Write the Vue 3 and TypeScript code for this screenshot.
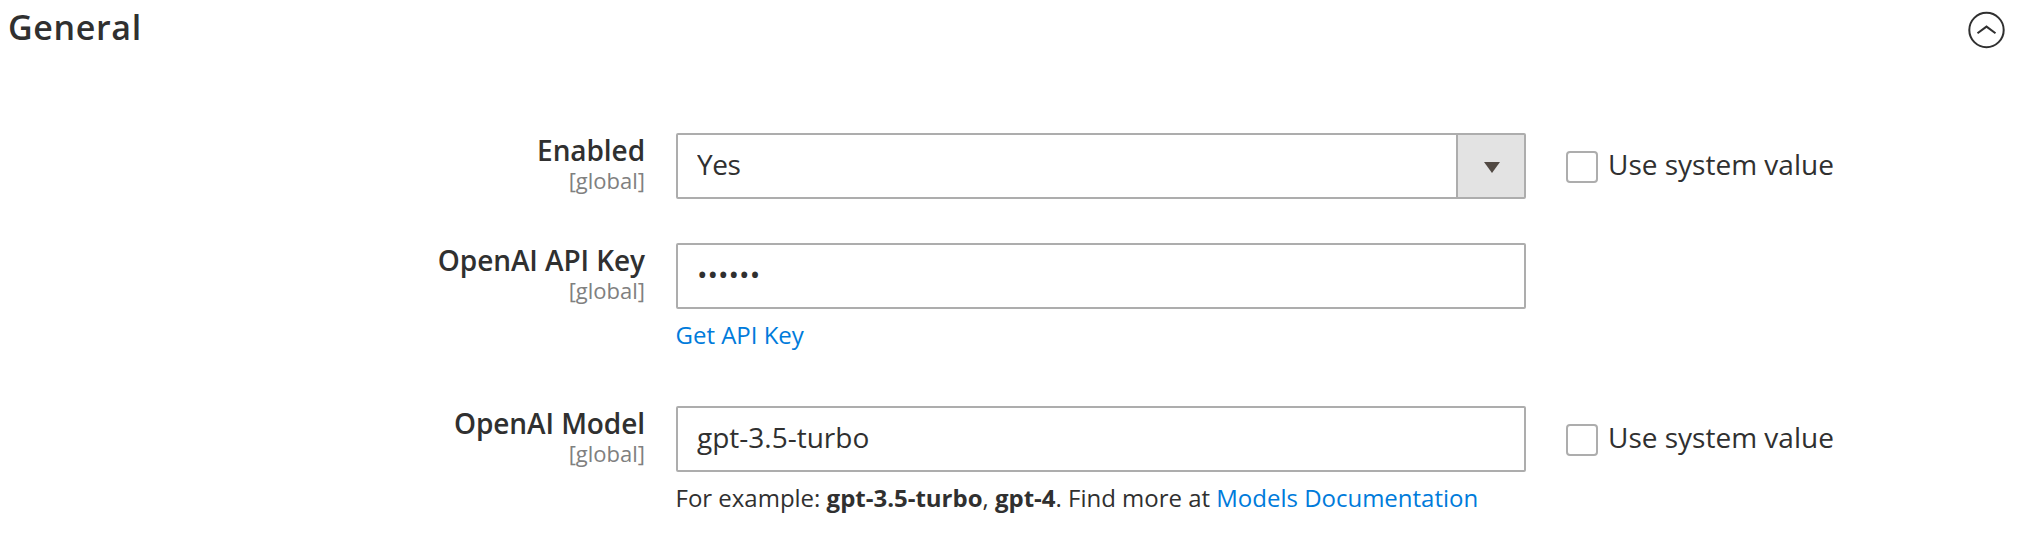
<script setup lang="ts">
import { ref } from 'vue'

interface Field {
  id: string
  label: string
  type: 'select' | 'password' | 'text'
  value: string
  inherit: boolean
}

const fields = ref<Field[]>([
  { id: 'enabled', label: 'Enabled', type: 'select', value: 'Yes', inherit: true },
  { id: 'api-key', label: 'OpenAI API Key', type: 'password', value: '******', inherit: false },
  { id: 'model', label: 'OpenAI Model', type: 'text', value: 'gpt-3.5-turbo', inherit: true },
])
</script>

<template>
  <section class="config">
    <header class="head">
      <h2 class="title">General</h2>
      <svg class="toggle" viewBox="0 0 38 38" aria-hidden="true">
        <circle cx="18.5" cy="19" r="17.2" />
        <path d="M9.5 22.3 18.5 15.6 27.5 22.3" />
      </svg>
    </header>
    <div v-for="f in fields" :key="f.id" class="row" :class="f.id">
      <label class="label" :for="f.id">
        <span class="name">{{ f.label }}</span>
        <span class="scope">[global]</span>
      </label>
      <div class="value">
        <div v-if="f.type === 'select'" class="select">
          <select :id="f.id" v-model="f.value" class="control">
            <option>Yes</option>
            <option>No</option>
          </select>
          <span class="arrow"><svg viewBox="0 0 16 11"><path d="M0 0H16L8 11Z" /></svg></span>
        </div>
        <input v-else :id="f.id" v-model="f.value" class="control" :type="f.type" />
        <p v-if="f.id === 'api-key'" class="note"><a>Get API Key</a></p>
        <p v-if="f.id === 'model'" class="note">
          For example: <b>gpt-3.5-turbo</b>, <b>gpt-4</b>. Find more at <a>Models Documentation</a>
        </p>
      </div>
      <label v-if="f.inherit" class="inherit">
        <input class="box" type="checkbox" />
        <span class="inherit-text">Use system value</span>
      </label>
    </div>
  </section>
</template>

<style>
body {
  margin: 0;
  background: #fff;
}
</style>

<style scoped>
.config {
  box-sizing: border-box;
  height: 536px;
  overflow: hidden;
  color: #303030;
  font-family: "Open Sans", "Noto Sans", sans-serif;
  font-size: 28px;
}
.head {
  display: flex;
  justify-content: space-between;
  box-sizing: border-box;
  height: 133px;
  padding: 7px 12px 0 8px;
}
.title {
  margin: 0;
  font-size: 34px;
  font-weight: 600;
  line-height: 40px;
  letter-spacing: 0.65px;
}
.toggle {
  width: 38px;
  height: 38px;
  margin-top: 4px;
  fill: none;
  stroke: #303030;
  stroke-width: 2;
}
.row {
  display: grid;
  grid-template-columns: 645px 850px auto;
  column-gap: 31px;
  align-items: start;
  justify-content: start;
}
.row.enabled {
  margin-bottom: 44px;
}
.row.api-key {
  margin-bottom: 55px;
}
.label {
  display: flex;
  flex-direction: column;
  align-items: flex-end;
  padding-top: 1px;
}
.name {
  font-weight: 600;
  line-height: 32px;
  letter-spacing: -0.08px;
}
.scope {
  color: #808080;
  font-size: 22px;
  line-height: 28px;
}
.select {
  display: grid;
}
.select > * {
  grid-area: 1 / 1;
}
.control {
  display: block;
  box-sizing: border-box;
  width: 100%;
  height: 66px;
  margin: 0;
  padding: 0 19px 4px;
  border: 2px solid #adadad;
  border-radius: 2px;
  outline: 0;
  background: #fff;
  color: #303030;
  font: inherit;
  appearance: none;
}
select.control {
  letter-spacing: -0.4px;
}
.arrow {
  display: flex;
  align-items: center;
  justify-content: center;
  justify-self: end;
  box-sizing: border-box;
  width: 68px;
  height: 62px;
  margin: 2px 2px 2px 0;
  border-left: 2px solid #adadad;
  background: #e3e3e3;
  pointer-events: none;
}
.arrow svg {
  width: 16px;
  height: 11px;
  margin-top: 2px;
  margin-left: 2px;
  fill: #514943;
}
.note {
  margin: 10px 0 0;
  font-size: 24px;
  line-height: 32px;
  letter-spacing: -0.01px;
  text-indent: -0.5px;
  white-space: nowrap;
}
.note a {
  color: #007bdb;
}
.inherit {
  display: flex;
  gap: 10px;
  padding: 18px 0 0 9px;
}
.box {
  box-sizing: border-box;
  width: 32px;
  height: 32px;
  margin: 0;
  border: 2px solid #adadad;
  border-radius: 4px;
  background: #fff;
  appearance: none;
}
.inherit-text {
  margin-top: -5px;
  line-height: 36px;
  white-space: nowrap;
}
</style>
